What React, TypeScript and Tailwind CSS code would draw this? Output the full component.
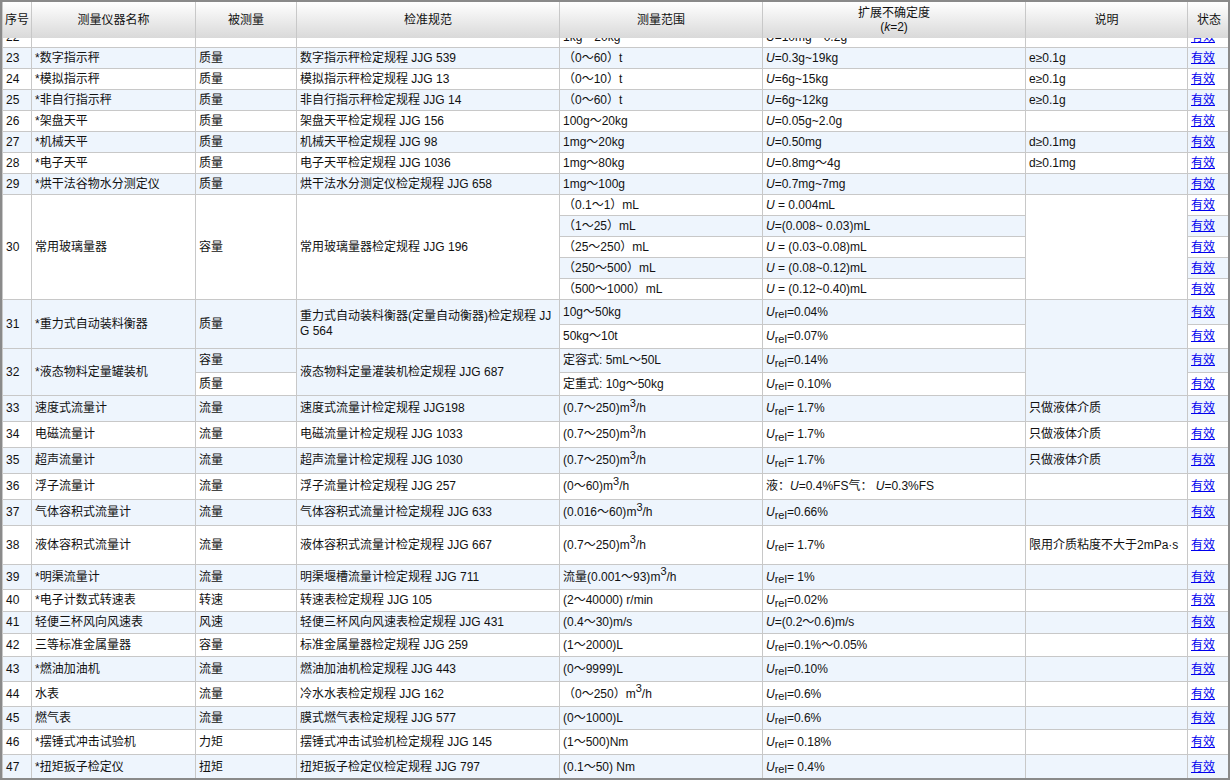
import React from "react";

type Cell = { v: React.ReactNode; rs?: number };
type Row = { h: number; cells: Cell[] };

const U = () => <i>U</i>;
const Ur = () => (
  <>
    <i>U</i>
    <sub className="text-[11px]">rel</sub>
  </>
);
const M3 = () => (
  <>
    m<sup className="text-[11px]">3</sup>/h
  </>
);

const s = (v: React.ReactNode, rs?: number): Cell => ({ v, rs });

const simple = (
  h: number,
  n: string,
  name: string,
  qty: string,
  spec: string,
  range: React.ReactNode,
  unc: React.ReactNode,
  note: React.ReactNode = ""
): Row => ({ h, cells: [s(n), s(name), s(qty), s(spec), s(range), s(unc), s(note), s("link")] });

const rows: Row[] = [
  simple(21, "22", "", "", "", "1kg～20kg", <><U />=10mg～0.2g</>),
  simple(21, "23", "*数字指示秤", "质量", "数字指示秤检定规程 JJG 539", "（0～60）t", <><U />=0.3g~19kg</>, "e≥0.1g"),
  simple(21, "24", "*模拟指示秤", "质量", "模拟指示秤检定规程 JJG 13", "（0～10）t", <><U />=6g~15kg</>, "e≥0.1g"),
  simple(21, "25", "*非自行指示秤", "质量", "非自行指示秤检定规程 JJG 14", "（0～60）t", <><U />=6g~12kg</>, "e≥0.1g"),
  simple(21, "26", "*架盘天平", "质量", "架盘天平检定规程 JJG 156", "100g～20kg", <><U />=0.05g~2.0g</>),
  simple(21, "27", "*机械天平", "质量", "机械天平检定规程 JJG 98", "1mg～20kg", <><U />=0.50mg</>, "d≥0.1mg"),
  simple(21, "28", "*电子天平", "质量", "电子天平检定规程 JJG 1036", "1mg～80kg", <><U />=0.8mg～4g</>, "d≥0.1mg"),
  simple(21, "29", "*烘干法谷物水分测定仪", "质量", "烘干法水分测定仪检定规程 JJG 658", "1mg～100g", <><U />=0.7mg~7mg</>),
  { h: 21, cells: [s("30", 5), s("常用玻璃量器", 5), s("容量", 5), s("常用玻璃量器检定规程 JJG 196", 5), s("（0.1～1）mL"), s(<><U /> = 0.004mL</>), s("", 5), s("link")] },
  { h: 21, cells: [s("（1～25）mL"), s(<><U />=(0.008~ 0.03)mL</>), s("link")] },
  { h: 21, cells: [s("（25～250）mL"), s(<><U /> = (0.03~0.08)mL</>), s("link")] },
  { h: 21, cells: [s("（250～500）mL"), s(<><U /> = (0.08~0.12)mL</>), s("link")] },
  { h: 21, cells: [s("（500～1000）mL"), s(<><U /> = (0.12~0.40)mL</>), s("link")] },
  { h: 25, cells: [s("31", 2), s("*重力式自动装料衡器", 2), s("质量", 2), s(<>重力式自动装料衡器(定量自动衡器)检定规程 JJG 564</>, 2), s("10g～50kg"), s(<><Ur />=0.04%</>), s("", 2), s("link")] },
  { h: 24, cells: [s("50kg～10t"), s(<><Ur />=0.07%</>), s("link")] },
  { h: 24, cells: [s("32", 2), s("*液态物料定量罐装机", 2), s("容量"), s("液态物料定量灌装机检定规程 JJG 687", 2), s("定容式: 5mL～50L"), s(<><Ur />=0.14%</>), s("", 2), s("link")] },
  { h: 23, cells: [s("质量"), s("定重式: 10g～50kg"), s(<><Ur />= 0.10%</>), s("link")] },
  simple(26, "33", "速度式流量计", "流量", "速度式流量计检定规程 JJG198", <>(0.7～250)<M3 /></>, <><Ur />= 1.7%</>, "只做液体介质"),
  simple(26, "34", "电磁流量计", "流量", "电磁流量计检定规程 JJG 1033", <>(0.7～250)<M3 /></>, <><Ur />= 1.7%</>, "只做液体介质"),
  simple(26, "35", "超声流量计", "流量", "超声流量计检定规程 JJG 1030", <>(0.7～250)<M3 /></>, <><Ur />= 1.7%</>, "只做液体介质"),
  simple(26, "36", "浮子流量计", "流量", "浮子流量计检定规程 JJG 257", <>(0～60)<M3 /></>, <>液：<U />=0.4%FS气： <U />=0.3%FS</>),
  simple(26, "37", "气体容积式流量计", "流量", "气体容积式流量计检定规程 JJG 633", <>(0.016～60)<M3 /></>, <><Ur />=0.66%</>),
  simple(39, "38", "液体容积式流量计", "流量", "液体容积式流量计检定规程 JJG 667", <>(0.7～250)<M3 /></>, <><Ur />= 1.7%</>, "限用介质粘度不大于2mPa·s"),
  simple(25, "39", "*明渠流量计", "流量", "明渠堰槽流量计检定规程 JJG 711", <>流量(0.001～93)<M3 /></>, <><Ur />= 1%</>),
  simple(22, "40", "*电子计数式转速表", "转速", "转速表检定规程 JJG 105", "(2～40000) r/min", <><Ur />=0.02%</>),
  simple(22, "41", "轻便三杯风向风速表", "风速", "轻便三杯风向风速表检定规程 JJG 431", "(0.4～30)m/s", <><U />=(0.2～0.6)m/s</>),
  simple(23, "42", "三等标准金属量器", "容量", "标准金属量器检定规程 JJG 259", "(1～2000)L", <><Ur />=0.1%～0.05%</>),
  simple(25, "43", "*燃油加油机", "流量", "燃油加油机检定规程 JJG 443", "(0～9999)L", <><Ur />=0.10%</>),
  simple(25, "44", "水表", "流量", "冷水水表检定规程 JJG 162", <>（0～250）<M3 /></>, <><Ur />=0.6%</>),
  simple(23, "45", "燃气表", "流量", "膜式燃气表检定规程 JJG 577", "(0～1000)L", <><Ur />=0.6%</>),
  simple(25, "46", "*摆锤式冲击试验机", "力矩", "摆锤式冲击试验机检定规程 JJG 145", "(1～500)Nm", <><Ur />= 0.18%</>),
  simple(25, "47", "*扭矩扳子检定仪", "扭矩", "扭矩扳子检定仪检定规程 JJG 797", "(0.1～50) Nm", <><Ur />= 0.4%</>),
];

const widths = [29, 164, 101, 263, 203, 263, 162, 43];
const heads: React.ReactNode[] = [
  "序号",
  "测量仪器名称",
  "被测量",
  "检准规范",
  "测量范围",
  <>扩展不确定度<br />(<i>k</i>=2)</>,
  "说明",
  "状态",
];

const Cols = () => (
  <colgroup>
    {widths.map((w, i) => (
      <col key={i} style={{ width: w }} />
    ))}
  </colgroup>
);

export default function App() {
  return (
    <div
      className="w-[1230px] h-[780px] overflow-hidden border-2 border-[#8a8a8a] bg-white text-[12px] text-[#111]"
      style={{ fontFamily: '"Liberation Sans", "Noto Sans CJK SC", sans-serif' }}
    >
      <table className="relative z-10 table-fixed border-collapse w-[1226px]">
        <Cols />
        <thead>
          <tr className="h-[36px] bg-gradient-to-b from-white to-[#d9d9d9]">
            {heads.map((h, i) => (
              <th key={i} className="border-x border-[#c8c8c8] font-normal text-center leading-[14px] px-[2px]">
                {h}
              </th>
            ))}
          </tr>
        </thead>
      </table>
      <div className="-mt-[12px]">
        <table className="table-fixed border-collapse w-[1226px]">
          <Cols />
          <tbody>
            {rows.map((r, ri) => (
              <tr key={ri} style={{ height: r.h }} className={ri % 2 === 1 ? "bg-[#eef5fd]" : "bg-white"}>
                {r.cells.map((c, ci) => (
                  <td
                    key={ci}
                    rowSpan={c.rs}
                    className="border border-[#c8c8c8] px-[3px] py-0 align-middle leading-[15px] break-all"
                  >
                    {c.v === "link" ? (
                      <a href="#" className="text-[#0000ee] underline">
                        有效
                      </a>
                    ) : (
                      c.v
                    )}
                  </td>
                ))}
              </tr>
            ))}
          </tbody>
        </table>
      </div>
    </div>
  );
}
